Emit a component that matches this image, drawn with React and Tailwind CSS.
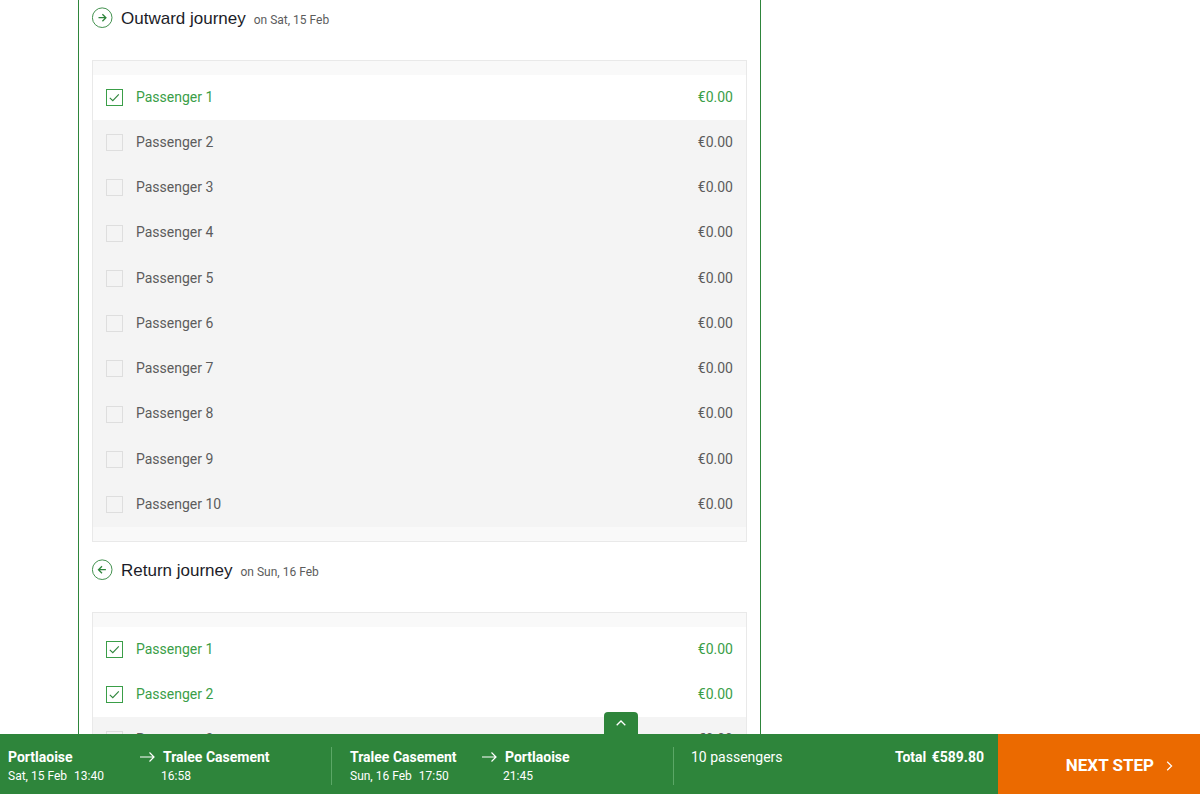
import React, { useState } from "react";

const journeys = [
  {
    title: "Outward journey",
    date: "on Sat, 15 Feb",
    direction: "right",
    selected: [1],
  },
  {
    title: "Return journey",
    date: "on Sun, 16 Feb",
    direction: "left",
    selected: [1, 2],
  },
];

const legs = [
  {
    from: "Portlaoise",
    to: "Tralee Casement",
    date: "Sat, 15 Feb",
    departure: "13:40",
    arrival: "16:58",
  },
  {
    from: "Tralee Casement",
    to: "Portlaoise",
    date: "Sun, 16 Feb",
    departure: "17:50",
    arrival: "21:45",
  },
];

const passengers = Array.from({ length: 10 }, (_, index) => index + 1);

const CircleArrow = ({ direction }) => (
  <svg
    width="22"
    height="22"
    viewBox="0 0 22 22"
    fill="none"
    stroke="#2e853b"
    className="shrink-0"
    aria-hidden="true"
  >
    <circle cx="10.2" cy="10.7" r="9.8" strokeWidth="0.9" />
    {direction === "right" ? (
      <path d="M6.5 10.7h7.4M10.4 7.2l3.5 3.5-3.5 3.5" strokeWidth="1.3" />
    ) : (
      <path d="M13.9 10.7H6.5M10 7.2l-3.5 3.5 3.5 3.5" strokeWidth="1.3" />
    )}
  </svg>
);

const PassengerRow = ({ number, defaultChecked }) => {
  const [checked, setChecked] = useState(defaultChecked);

  return (
    <label
      className={`flex h-[45px] items-center px-[13px] text-sm nth-[4n]:h-[46px] ${
        checked ? "bg-white text-[#3a9e48]" : "bg-[#f4f4f4] text-[#5c5c5c]"
      }`}
    >
      <span className="mr-[13px] grid shrink-0">
        <input
          type="checkbox"
          checked={checked}
          onChange={(e) => setChecked(e.target.checked)}
          className="col-start-1 row-start-1 size-[17px] appearance-none border border-[#dedede] checked:border-[#3a9e48]"
        />
        {checked && (
          <svg
            viewBox="0 0 17 17"
            fill="none"
            stroke="#2e853b"
            strokeWidth="1.1"
            className="pointer-events-none col-start-1 row-start-1 size-[17px]"
            aria-hidden="true"
          >
            <path d="M3.8 8.8l3 2.9 6-6.4" />
          </svg>
        )}
      </span>
      <span className="flex-1 pb-0.5">Passenger {number}</span>
      <span className="pb-0.5">€0.00</span>
    </label>
  );
};

const JourneySection = ({ journey }) => (
  <section>
    <div className="flex h-[70px] items-start pt-[17px]">
      <CircleArrow direction={journey.direction} />
      <div className="flex items-baseline gap-2 pl-[7px]">
        <h2 className="font-['Liberation_Sans',sans-serif] text-[17px] leading-6 text-[#1c1c28]">
          {journey.title}
        </h2>
        <span className="text-xs leading-6 text-[#5c5c5c]">
          {journey.date}
        </span>
      </div>
    </div>
    <div className="border border-[#e9e9e9] bg-[#f9f9f9] py-[14px]">
      {passengers.map((number) => (
        <PassengerRow
          key={number}
          number={number}
          defaultChecked={journey.selected.includes(number)}
        />
      ))}
    </div>
  </section>
);

const Leg = ({ leg }) => (
  <div className="flex">
    <div className="w-[132px]">
      <p className="text-sm leading-5 font-bold">{leg.from}</p>
      <p className="text-xs leading-[18px]">
        {leg.date}
        <span className="ml-[7px]">{leg.departure}</span>
      </p>
    </div>
    <svg
      viewBox="0 0 15 12"
      fill="none"
      stroke="white"
      strokeWidth="1.2"
      className="mt-1 mr-1.5 h-3 w-[15px] shrink-0"
      aria-hidden="true"
    >
      <path d="M0 6h14M9.5 1.5L14 6l-4.5 4.5" />
    </svg>
    <div>
      <p className="pl-0.5 text-sm leading-5 font-bold">{leg.to}</p>
      <p className="text-xs leading-[18px]">{leg.arrival}</p>
    </div>
  </div>
);

const BookingBar = () => (
  <footer className="relative flex h-[60px] shrink-0 bg-[#2e853b] text-white">
    <button
      type="button"
      aria-label="Show booking details"
      className="absolute -top-[22px] left-[604px] flex h-[22px] w-[34px] items-center justify-center rounded-t-sm bg-[#2e853b]"
    >
      <svg width="10" height="6" viewBox="0 0 10 6" fill="none" stroke="white" strokeWidth="1.3">
        <path d="M0.7 5.3L5 1l4.3 4.3" />
      </svg>
    </button>
    <div className="flex min-w-0 flex-1 pt-[13px] pb-[9px]">
      <div className="w-[332px] border-r border-[#5ba766] pl-2">
        <Leg leg={legs[0]} />
      </div>
      <div className="w-[342px] border-r border-[#5ba766] pl-[18px]">
        <Leg leg={legs[1]} />
      </div>
      <p className="flex-1 pl-[17px] text-sm leading-5">10 passengers</p>
      <p className="pr-[14px] text-sm leading-5 font-bold">
        Total <span className="ml-0.5">€589.80</span>
      </p>
    </div>
    <button
      type="button"
      className="flex w-[202px] items-center justify-end gap-3 bg-[#eb6a00] pt-1 pr-[27px] text-[17px] font-bold"
    >
      NEXT STEP
      <svg width="7" height="10" viewBox="0 0 7 10" fill="none" stroke="white" strokeWidth="1.2">
        <path d="M1.2 0.7L5.6 5 1.2 9.3" />
      </svg>
    </button>
  </footer>
);

const App = () => {
  return (
    <div className="flex h-screen flex-col bg-white font-[Roboto,sans-serif]">
      <main className="min-h-0 flex-1 overflow-hidden px-[78px]">
        <div className="-mt-2.5 max-w-[683px] border-x border-[#2e853b] px-[13px]">
          {journeys.map((journey) => (
            <JourneySection key={journey.title} journey={journey} />
          ))}
        </div>
      </main>
      <BookingBar />
    </div>
  );
};

export default App;
